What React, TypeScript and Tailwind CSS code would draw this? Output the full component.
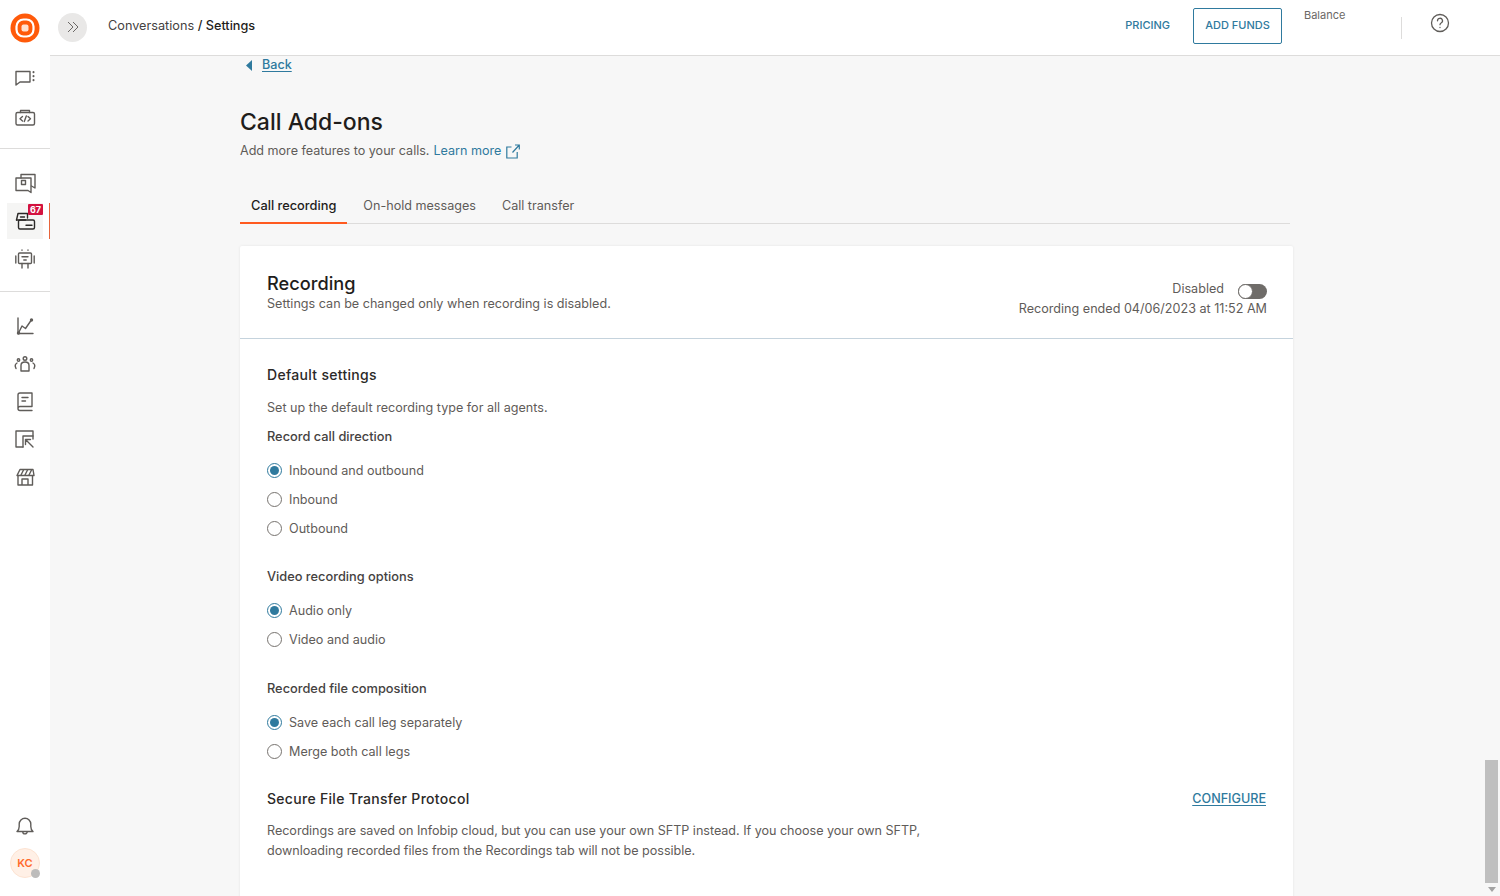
const ink = "#5f5c59";

function Svg({ children, stroke = ink }: { children: React.ReactNode; stroke?: string }) {
  return (
    <svg width="24" height="24" viewBox="0 0 24 24" fill="none" stroke={stroke} strokeWidth="1.4" strokeLinecap="round" strokeLinejoin="round">
      {children}
    </svg>
  );
}

function NavItem({ children, active, badge }: { children: React.ReactNode; active?: boolean; badge?: string }) {
  return (
    <div className={`relative w-[36px] h-[36px] flex items-center justify-center ${active ? "bg-[#f5f5f4]" : ""}`}>
      {children}
      {badge && (
        <span className="absolute top-[1px] right-0 h-[11px] px-[2px] bg-[#d3123f] text-white text-[9px] leading-[11px] font-bold rounded-[1px]">
          {badge}
        </span>
      )}
    </div>
  );
}

function Radio({ label, checked }: { label: string; checked?: boolean }) {
  return (
    <div className="h-[29px] flex items-center gap-[7px]">
      <span className={`w-[15px] h-[15px] rounded-full border-[1.5px] flex items-center justify-center ${checked ? "border-[#2f7a9e]" : "border-[#77736f]"}`}>
        {checked && <span className="w-[9px] h-[9px] rounded-full bg-[#2f7a9e]" />}
      </span>
      <span className="mt-[2px] text-[12.6px] text-[#5f5c59]">{label}</span>
    </div>
  );
}

function Sidebar() {
  return (
    <aside className="w-[50px] shrink-0 bg-white flex flex-col items-center">
      <div className="h-[56px] flex items-center justify-center w-full">
        <svg width="30" height="30" viewBox="0 0 30 30" fill="none">
          <circle cx="15" cy="15" r="14.5" fill="#ff5a0a" />
          <rect x="6.5" y="6.5" width="17" height="17" rx="7" fill="#ff5a0a" stroke="#ffffff" strokeWidth="2.2" />
          <rect x="11.500" y="11.500" width="7" height="7" rx="2" fill="#ffe0cf" />
        </svg>
      </div>
      <div className="w-full h-[93px] border-b border-[#dddcdb] flex flex-col items-center pt-[3px] gap-[5px]">
        <NavItem>
          <Svg>
            <path d="M3 6.500h14V17H7l-4 3z" />
            <path d="M20.500 7v.3M20.500 11v.3M20.500 15v.3" strokeWidth="2" />
          </Svg>
        </NavItem>
        <NavItem>
          <Svg>
            <rect x="3" y="6.500" width="18.500" height="12.500" rx="1.500" />
            <path d="M7.500 6.500V4.500h9v2M9.500 10.500l-2.500 2.300 2.500 2.200M15 10.500l2.500 2.300-2.500 2.200M13.300 10l-2 5.500" />
          </Svg>
        </NavItem>
      </div>
      <div className="w-full h-[143px] border-b border-[#dddcdb] flex flex-col items-center pt-[16px] gap-[2px] relative">
        <NavItem>
          <Svg>
            <path d="M8 7V3.500h14v13.500l-3.500-2" />
            <path d="M8 7H3v12.500h12l3 2V7z" />
            <rect x="8.500" y="9.500" width="4" height="4" />
          </Svg>
        </NavItem>
        <NavItem active badge="67">
          <Svg stroke="#2b2927">
            <path d="M3.500 11l1.500-6.500h9.500V9" />
            <path d="M3.500 11h9" />
            <rect x="5.500" y="11" width="16" height="9" rx="1.500" />
            <path d="M13 16.200h6M7.500 8h4" />
          </Svg>
        </NavItem>
        <span className="absolute right-0 top-[54px] w-[1px] h-[36px] bg-[#e8643a]" />
        <NavItem>
          <Svg>
            <rect x="5.500" y="6" width="13" height="10.500" rx="1" />
            <path d="M9 9.800h6M10.800 13h2.400M9 3v.3M15 3v.3M9 16.500V21M15 16.500V21M2.800 9v7M21.200 9v7" />
          </Svg>
        </NavItem>
      </div>
      <div className="flex flex-col items-center pt-[16px] gap-[2px]">
        <NavItem>
          <Svg>
            <path d="M5 4v15.500h15" />
            <path d="M5.500 19l3.500-7 3.500 2.500 5.500-8" />
            <circle cx="18.500" cy="6" r="1" fill={ink} />
            <circle cx="5.500" cy="19" r="1" fill={ink} />
          </Svg>
        </NavItem>
        <NavItem>
          <Svg>
            <circle cx="12" cy="6.500" r="1.800" />
            <path d="M8 19v-5.500c0-2 1.500-3.500 4-3.500s4 1.500 4 3.500V19z" />
            <circle cx="5.500" cy="8" r="1.200" />
            <circle cx="18.500" cy="8" r="1.200" />
            <path d="M4 11c-1.800 1-2 3.500-1 5.500M20 11c1.800 1 2 3.500 1 5.500" />
          </Svg>
        </NavItem>
        <NavItem>
          <Svg>
            <path d="M5 18.500V5A2 2 0 0 1 7 3H19V16.500H7A2 2 0 0 0 5 18.500 2 2 0 0 0 7 20.500H19" />
            <path d="M9 7.500h6M9 11h3.500" />
          </Svg>
        </NavItem>
        <div className="mt-[-1px]">
          <NavItem>
            <Svg>
              <path d="M10 20H3V4h17v8" />
              <path d="M10 20V9h10" />
              <path d="M12.500 12.500h5M12.500 12.500v5M12.500 12.500l7.500 7.500" />
            </Svg>
          </NavItem>
        </div>
        <NavItem>
          <Svg>
            <path d="M7 4.500h13l1 6H4z" />
            <path d="M8 10l2.500-5M12 10l2.500-5M16 10l2.500-5" />
            <path d="M5 11v9h14.500V11M9 20v-6h6v6" />
          </Svg>
        </NavItem>
      </div>
      <div className="mt-auto pb-[18px] flex flex-col items-center gap-[12px]">
        <svg width="20" height="20" viewBox="0 0 20 20" fill="none" stroke={ink} strokeWidth="1.4" strokeLinecap="round" strokeLinejoin="round">
          <path d="M2 15.500c1.500-1.200 2.200-2.500 2.200-5V8a5.800 5.800 0 0 1 11.600 0v2.500c0 2.500 .7 3.800 2.200 5z" />
          <path d="M7.800 15.700a2.200 2.200 0 0 0 4.400 0" />
        </svg>
        <div className="relative w-[30px] h-[30px] rounded-full bg-[#fff0e6] border border-[#fde3d2] flex items-center justify-center text-[11px] font-semibold text-[#ff6a2b]">
          KC
          <span className="absolute right-[-1px] bottom-[-1px] w-[9px] h-[9px] rounded-full bg-[#bdbcbb]" />
        </div>
      </div>
    </aside>
  );
}

function Header() {
  return (
    <header className="h-[56px] shrink-0 bg-white border-b border-[#dddcdb] flex items-center">
      <div className="ml-[8px] mt-[-1px] w-[29px] h-[29px] rounded-full bg-[#e9e8e7] flex items-center justify-center">
        <svg width="14" height="14" viewBox="0 0 14 14" fill="none" stroke="#6b6865" strokeWidth="1">
          <path d="M2 2l5 5-5 5M7 2l5 5-5 5" />
        </svg>
      </div>
      <div className="ml-[21px] mt-[-3px] text-[12.7px] text-[#45423f]">
        Conversations <span className="font-medium text-[#1f1d1b]">/ Settings</span>
      </div>
      <div className="ml-auto flex items-center h-full">
        <span className="text-[11px] font-medium text-[#2f7a9e] mr-[23px] mb-[4px]">PRICING</span>
        <button className="w-[89px] h-[36px] mb-[4px] rounded-[2px] border border-[#2f7a9e] text-[11px] font-medium text-[#2f7a9e] mr-[22px]">ADD FUNDS</button>
        <div className="w-[97px] self-start pt-[7px] text-[11px] text-[#6b6865]">Balance</div>
        <span className="w-[1px] h-[22px] bg-[#dddcdb] mr-[28px]" />
        <svg width="20" height="20" viewBox="0 0 20 20" fill="none" stroke="#5f5c59" strokeWidth="1.3" strokeLinecap="round" className="mr-[50px] mb-[9px]">
          <circle cx="10" cy="10" r="8.500" />
          <path d="M7.500 7.800a2.500 2.500 0 1 1 3.600 2.200c-.8.400-1.100 1-1.100 1.700M10 14.500v.1" />
        </svg>
      </div>
    </header>
  );
}

export default function App() {
  return (
    <div className="h-[896px] w-[1500px] overflow-hidden flex bg-[#f7f7f7] font-['Inter',sans-serif]">
      <Sidebar />
      <div className="flex-1 min-w-0 flex flex-col">
        <Header />
        <div className="flex-1 min-h-0 flex overflow-hidden">
          <main className="w-[1434px] shrink-0 pl-[190px]">
            <div className="h-[18px] flex items-center text-[12.6px] text-[#2f7a9e]">
              <svg width="8" height="11" viewBox="0 0 8 11" className="ml-[5px] mr-[9px]"><path d="M7 0v11L1 5.500z" fill="#2f7a9e" /></svg>
              <span className="underline underline-offset-2 font-medium mt-[1px]">Back</span>
            </div>
            <h1 className="mt-[32px] text-[23px] leading-[32px] font-medium text-[#1f1d1b]">Call Add-ons</h1>
            <p className="mt-[3px] flex items-center text-[12.6px] tracking-[-0.02px] leading-[20px] text-[#5f5c59]">
              Add more features to your calls.
              <span className="text-[#2f7a9e] ml-[4px] mr-[5px]">Learn more</span>
              <svg width="14" height="15" viewBox="0 0 14 15" fill="none" stroke="#2f7a9e" strokeWidth="1.2">
                <path d="M5.500 3H.8v11h10.400V8M6.500 8.500L13.300 1M9 1h4.300v4.500" />
              </svg>
            </p>
            <div className="mt-[21px] w-[1050px] h-[42px] border-b border-[#dddcdb] flex text-[12.6px]">
              <div className="h-[42px] px-[11px] pt-[8px] border-b-2 border-[#ff5a1f] flex items-center font-medium text-[12.8px] text-[#1f1d1b]">Call recording</div>
              <div className="ml-[16px] h-[41px] pt-[8px] flex items-center text-[#5f5c59]">On-hold messages</div>
              <div className="ml-[26px] h-[41px] pt-[8px] flex items-center text-[#5f5c59]">Call transfer</div>
            </div>
            <section className="mt-[22px] w-[1053px] bg-white rounded-[2px] shadow-[0_0_3px_rgba(0,0,0,0.08)] h-[700px]">
              <div className="h-[93px] pl-[27px] pr-[26px] border-b border-[#c5d3dd] flex justify-between">
                <div className="pt-[25px]">
                  <h2 className="text-[18.2px] leading-[24px] font-medium text-[#1f1d1b]">Recording</h2>
                  <p className="mt-[1px] text-[12.6px] leading-[16px] text-[#5f5c59]">Settings can be changed only when recording is disabled.</p>
                </div>
                <div className="pt-[34px] flex flex-col items-end">
                  <div className="h-[19px] flex items-center gap-[14px] text-[12.6px] text-[#5f5c59]">
                    Disabled
                    <span className="w-[29px] h-[15px] rounded-full bg-[#6f6c69] relative mt-[4px]">
                      <span className="absolute left-0 top-0 w-[15px] h-[15px] rounded-full bg-white border border-[#6f6c69]" />
                    </span>
                  </div>
                  <div className="text-[12.6px] leading-[20px] text-[#5f5c59]">Recording ended 04/06/2023 at 11:52 AM</div>
                </div>
              </div>
              <div className="px-[27px] pt-[26px]">
                <h3 className="text-[14px] leading-[20px] font-medium text-[#2b2927] tracking-[0.3px]">Default settings</h3>
                <p className="mt-[13px] text-[12.6px] leading-[20px] text-[#5f5c59]">Set up the default recording type for all agents.</p>
                <h4 className="mt-[9px] text-[12.8px] leading-[20px] font-medium text-[#45423f]">Record call direction</h4>
                <div className="mt-[9px]">
                  <Radio label="Inbound and outbound" checked />
                  <Radio label="Inbound" />
                  <Radio label="Outbound" />
                </div>
                <h4 className="mt-[24px] text-[12.8px] leading-[20px] font-medium text-[#45423f]">Video recording options</h4>
                <div className="mt-[9px]">
                  <Radio label="Audio only" checked />
                  <Radio label="Video and audio" />
                </div>
                <h4 className="mt-[25px] text-[12.8px] leading-[20px] font-medium text-[#45423f]">Recorded file composition</h4>
                <div className="mt-[9px]">
                  <Radio label="Save each call leg separately" checked />
                  <Radio label="Merge both call legs" />
                </div>
                <div className="mt-[23px] flex justify-between items-center">
                  <h3 className="text-[14px] leading-[20px] font-medium text-[#2b2927] tracking-[0.3px]">Secure File Transfer Protocol</h3>
                  <span className="text-[12.6px] font-medium text-[#2f7a9e] underline underline-offset-2">CONFIGURE</span>
                </div>
                <p className="mt-[12px] w-[680px] text-[12.6px] tracking-[-0.03px] leading-[20px] text-[#5f5c59]">
                  Recordings are saved on Infobip cloud, but you can use your own SFTP instead. If you choose your own SFTP, downloading recorded files from the Recordings tab will not be possible.
                </p>
              </div>
            </section>
          </main>
          <div className="w-[16px] shrink-0 flex flex-col justify-end items-center">
            <div className="w-[13px] h-[123px] bg-[#bfbfbf] ml-[-1px]" />
            <div className="w-[16px] h-[13px] flex items-center justify-center">
              <svg width="8" height="5" viewBox="0 0 8 5"><path d="M0 0h8L4 5z" fill="#a3a3a3" /></svg>
            </div>
          </div>
        </div>
      </div>
    </div>
  );
}
